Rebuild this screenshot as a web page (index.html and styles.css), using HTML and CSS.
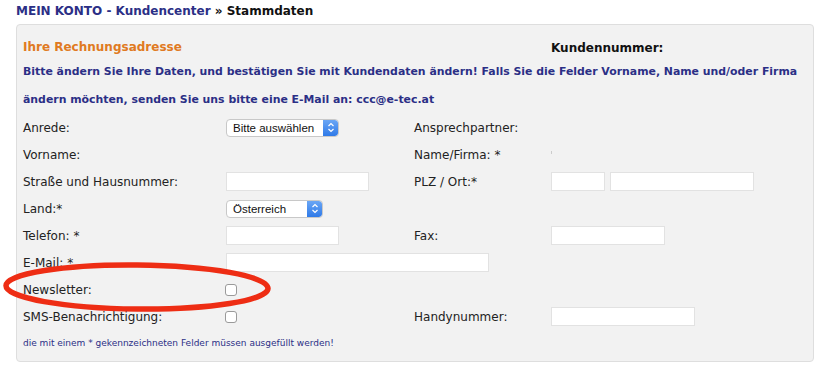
FILE: index.html
```html
<!DOCTYPE html>
<html lang="de">
<head>
<meta charset="utf-8">
<link rel="stylesheet" href="styles.css">
</head>
<body>
<div class="crumb"><span class="crumb-blue">MEIN KONTO - Kundencenter</span> » Stammdaten</div>
<div class="panel">
  <div class="head">
    <div class="head-title">Ihre Rechnungsadresse</div>
    <div class="head-kd">Kundennummer:</div>
  </div>
  <p class="info">Bitte ändern Sie Ihre Daten, und bestätigen Sie mit Kundendaten ändern! Falls Sie die Felder Vorname, Name und/oder Firma ändern möchten, senden Sie uns bitte eine E-Mail an: ccc@e-tec.at</p>
  <div class="form">
    <div class="lbl">Anrede:</div>
    <div class="fld"><div class="sel sel-anrede"><span class="sel-text">Bitte auswählen</span><span class="sel-btn"><svg width="8" height="11" viewBox="0 0 8 11"><path d="M1.5 4 L4 1.5 L6.5 4 M1.5 7 L4 9.5 L6.5 7" fill="none" stroke="#fff" stroke-width="1.2"/></svg></span></div></div>
    <div class="lbl">Ansprechpartner:</div>
    <div class="fld"></div>

    <div class="lbl">Vorname:</div>
    <div class="fld"></div>
    <div class="lbl">Name/Firma: *</div>
    <div class="fld"><span class="speck"></span></div>

    <div class="lbl">Straße und Hausnummer:</div>
    <div class="fld"><span class="inp w142"></span></div>
    <div class="lbl">PLZ / Ort:*</div>
    <div class="fld pair"><span class="inp w53"></span><span class="inp w143"></span></div>

    <div class="lbl">Land:*</div>
    <div class="fld"><div class="sel sel-land"><span class="sel-text">Österreich</span><span class="sel-btn"><svg width="8" height="11" viewBox="0 0 8 11"><path d="M1.5 4 L4 1.5 L6.5 4 M1.5 7 L4 9.5 L6.5 7" fill="none" stroke="#fff" stroke-width="1.2"/></svg></span></div></div>
    <div class="lbl"></div>
    <div class="fld"></div>

    <div class="lbl">Telefon: *</div>
    <div class="fld"><span class="inp w112"></span></div>
    <div class="lbl">Fax:</div>
    <div class="fld"><span class="inp w113"></span></div>

    <div class="lbl">E-Mail: *</div>
    <div class="fld span3"><span class="inp w262"></span></div>

    <div class="lbl">Newsletter:</div>
    <div class="fld"><span class="chk"></span></div>
    <div class="lbl"></div>
    <div class="fld"></div>

    <div class="lbl">SMS-Benachrichtigung:</div>
    <div class="fld"><span class="chk"></span></div>
    <div class="lbl">Handynummer:</div>
    <div class="fld"><span class="inp w143"></span></div>
  </div>
  <p class="note">die mit einem * gekennzeichneten Felder müssen ausgefüllt werden!</p>
  <svg class="circle" width="274" height="54" viewBox="0 0 274 54"><ellipse cx="136" cy="26" rx="131" ry="22" fill="none" stroke="#ee2d14" stroke-width="5.5" transform="rotate(0.6 136 26)"/></svg>
</div>
</body>
</html>
```
FILE: styles.css
```css
html, body {
  margin: 0;
  padding: 0;
  background: #fff;
}
body {
  font-family: "DejaVu Sans", Verdana, sans-serif;
  color: #222;
  width: 821px;
  height: 369px;
  overflow: hidden;
}
.crumb {
  font-size: 12px;
  font-weight: bold;
  color: #111;
  padding: 3px 0 0 16px;
  height: 21px;
  line-height: 17px;
}
.crumb-blue {
  color: #2b2f86;
}
.panel {
  position: relative;
  margin-left: 16px;
  width: 798px;
  height: 338px;
  background: #f2f2f2;
  border: 1px solid #dedede;
  border-radius: 4px;
  padding: 0 0 0 6px;
  box-sizing: border-box;
}
.head {
  display: flex;
  height: 33px;
  align-items: flex-end;
  font-weight: bold;
  font-size: 12px;
  line-height: 16px;
}
.head-title {
  color: #e07a22;
  width: 528px;
  padding-bottom: 3px;
}
.head-kd {
  color: #111;
  padding-bottom: 2px;
}
.info {
  margin: 0;
  font-size: 10.9px;
  font-weight: bold;
  color: #2b2f86;
  line-height: 28px;
  width: 800px;
}
.form {
  display: grid;
  grid-template-columns: 203px 188px 137px 1fr;
  grid-auto-rows: 27px;
  font-size: 12px;
  color: #222;
}
.lbl {
  display: flex;
  align-items: center;
  white-space: nowrap;
}
.fld {
  display: flex;
  align-items: center;
}
.span3 {
  grid-column: 2 / span 3;
}
.pair {
  gap: 5px;
}
.inp {
  display: block;
  height: 19px;
  background: #fff;
  border: 1px solid #e2e2e2;
  box-sizing: border-box;
}
.w142 { width: 143px; }
.w53 { width: 54px; }
.w143 { width: 144px; }
.w112 { width: 113px; }
.w113 { width: 114px; }
.w262 { width: 263px; }
.chk {
  display: block;
  width: 12px;
  height: 12px;
  margin-left: -1px;
  border: 1px solid #9a9a9a;
  border-radius: 3px;
  background: #fff;
  box-sizing: border-box;
}
.sel {
  display: flex;
  align-items: center;
  justify-content: space-between;
  height: 18px;
  background: #fff;
  border: 1px solid #c8c8c8;
  border-radius: 4px;
  box-sizing: border-box;
  font-family: "Liberation Sans", Arial, sans-serif;
  font-size: 11.5px;
  color: #111;
  overflow: hidden;
}
.sel-anrede { width: 113px; }
.sel-land { width: 97px; }
.sel-text {
  padding-left: 6px;
}
.sel-btn {
  display: flex;
  align-items: center;
  justify-content: center;
  width: 15px;
  height: 16px;
  background: linear-gradient(#6aa6f5, #2f7ae8);
  border-radius: 0 3px 3px 0;
}
.speck {
  display: block;
  width: 1px;
  height: 3px;
  background: #ccc;
  margin-top: -4px;
}
.note {
  margin: 0;
  font-size: 9px;
  color: #2b2f86;
  line-height: 26px;
}
.circle {
  position: absolute;
  left: -16px;
  top: 236px;
}
```
